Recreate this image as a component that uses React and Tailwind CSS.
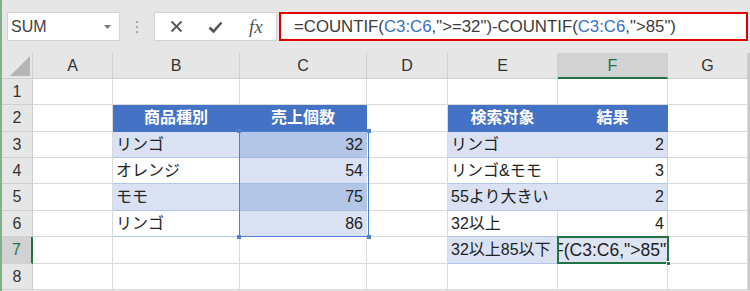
import React from "react";

const FONT = { fontFamily: '"Liberation Sans", "Noto Sans CJK JP", sans-serif' };

const K = {
  plain: "bg-white border-r border-b border-[#dadada]",
  head: "bg-[#4472c4] text-white font-bold border-r border-b border-[#4472c4]",
  band: "bg-[#d9e1f2] border-r border-b border-r-[#d9e1f2] border-b-[#b4c6e7]",
  bandEnd: "bg-[#d9e1f2] border-r border-b border-r-[#c3cfe9] border-b-[#b4c6e7]",
  white: "bg-white border-r border-b border-r-[#dadada] border-b-[#b4c6e7]",
  whiteEnd: "bg-white border-r border-b border-r-[#c3cfe9] border-b-[#b4c6e7]",
  selDark: "bg-[#b4c6e7] border-r border-b border-r-[#b4c6e7] border-b-[#a6bbe2]",
  selLight: "bg-[#d9e1f2] border-r border-b border-r-[#d9e1f2] border-b-[#a6bbe2]",
  active: "bg-[#dde5f3] border-r border-b border-[#dadada]",
};

const AL = {
  l: "justify-start pl-[3px]",
  r: "justify-end pr-[3px]",
  c: "justify-center",
};

const P = { k: "plain" };
const rows = [
  [P, P, P, P, P, P, P],
  [P, { k: "head", t: "商品種別", a: "c" }, { k: "head", t: "売上個数", a: "c" }, P, { k: "head", t: "検索対象", a: "c" }, { k: "head", t: "結果", a: "c" }, P],
  [P, { k: "band", t: "リンゴ" }, { k: "selDark", t: "32", a: "r" }, P, { k: "band", t: "リンゴ" }, { k: "bandEnd", t: "2", a: "r" }, P],
  [P, { k: "white", t: "オレンジ" }, { k: "selLight", t: "54", a: "r" }, P, { k: "white", t: "リンゴ&モモ" }, { k: "whiteEnd", t: "3", a: "r" }, P],
  [P, { k: "band", t: "モモ" }, { k: "selDark", t: "75", a: "r" }, P, { k: "band", t: "55より大きい" }, { k: "bandEnd", t: "2", a: "r" }, P],
  [P, { k: "white", t: "リンゴ" }, { k: "selLight", t: "86", a: "r" }, P, { k: "white", t: "32以上" }, { k: "whiteEnd", t: "4", a: "r" }, P],
  [P, P, P, P, { k: "band", t: "32以上85以下" }, { k: "active", f: true }, P],
  [P, P, P, P, P, P, P],
];

const letters = ["A", "B", "C", "D", "E", "F", "G"];

function Formula() {
  return (
    <>
      =COUNTIF(<span className="text-[#3a6fc2]">C3:C6</span>,"&gt;=32")-COUNTIF(
      <span className="text-[#3a6fc2]">C3:C6</span>,"&gt;85")
    </>
  );
}

export default function App() {
  return (
    <div className="flex w-[750px] h-[291px] overflow-hidden bg-[#e6e6e6]" style={FONT}>
      <div className="w-[2px] shrink-0 bg-[#7fb08c]" />
      <div className="flex flex-col flex-1">
        {/* toolbar */}
        <div className="h-[53px] shrink-0 flex items-start pt-[12px] bg-[#e6e6e6]">
          <div className="ml-[5px] w-[113px] h-[29px] bg-white border border-[#d4d4d4] flex items-center justify-between pl-[3px] pr-[8px]">
            <span className="text-[16px] text-[#444]">SUM</span>
            <svg width="7" height="4" viewBox="0 0 7 4"><path d="M0 0h7L3.5 4z" fill="#777" /></svg>
          </div>
          <div className="w-[34px] h-[29px] flex flex-col items-center justify-center gap-[3px]">
            <div className="w-[2px] h-[2px] bg-[#a8a8a8]" />
            <div className="w-[2px] h-[2px] bg-[#a8a8a8]" />
            <div className="w-[2px] h-[2px] bg-[#a8a8a8]" />
          </div>
          <div className="w-[123px] h-[29px] bg-white border border-[#d4d4d4] flex items-center">
            <div className="w-[41px] flex justify-center pl-[2px]">
              <svg width="13" height="13" viewBox="0 0 13 13"><path d="M1.5 1.5l10 10M11.5 1.5l-10 10" stroke="#555" strokeWidth="1.8" /></svg>
            </div>
            <div className="w-[41px] flex justify-center">
              <svg width="15" height="12" viewBox="0 0 15 12"><path d="M1.5 6.5l4 4 8-9" stroke="#555" strokeWidth="2.6" fill="none" /></svg>
            </div>
            <div className="w-[41px] flex justify-center">
              <span className="italic text-[19px] text-[#555] leading-none" style={{ fontFamily: '"Liberation Serif", serif' }}>fx</span>
            </div>
          </div>
          <div className="ml-[2px] w-[469px] h-[29px] bg-white border-2 border-[#e00000] flex items-center pl-[13px] text-[16.8px] text-[#3c3c3c] whitespace-nowrap">
            <Formula />
          </div>
        </div>
        {/* grid */}
        <div className="flex">
          <div className="relative grid grid-cols-[31px_80px_127px_127px_81px_110px_110px_80px] grid-rows-[26px_26px_27px_26px_26px_27px_26px_27px_26px] text-[16px] text-[#222]">
            {/* corner */}
            <div className="bg-[#e6e6e6] border-r border-b border-[#cfcfcf] flex items-end justify-end p-[2px]">
              <svg width="20" height="20" viewBox="0 0 20 20"><path d="M20 0V20H0z" fill="#b5b5b5" /></svg>
            </div>
            {letters.map((l) =>
              l === "F" ? (
                <div key={l} className="bg-[#d2d2d2] text-[#217346] border-r border-[#cfcfcf] border-b-2 border-b-[#217346] flex items-center justify-center pt-[1px]">{l}</div>
              ) : (
                <div key={l} className="bg-[#e6e6e6] text-[#333] border-r border-b border-[#cfcfcf] flex items-center justify-center">{l}</div>
              )
            )}
            {rows.map((r, i) => (
              <React.Fragment key={i}>
                {i === 6 ? (
                  <div className="bg-[#d2d2d2] text-[#217346] border-b border-b-[#cfcfcf] border-r-2 border-r-[#217346] flex items-center justify-center">{i + 1}</div>
                ) : (
                  <div className="bg-[#e6e6e6] text-[#333] border-r border-b border-[#cfcfcf] flex items-center justify-center">{i + 1}</div>
                )}
                {r.map((c, j) => (
                  <div key={j} className={`${K[c.k]} flex items-center overflow-hidden whitespace-nowrap ${c.f ? "justify-end" : AL[c.a || "l"]}`}>
                    {c.f ? (
                      <span className="mr-[-5px] text-[17.5px] text-[#222]"><span>=COUNTIF(C3:C6,"&gt;=32")-COUNTIF(C3:C6,"&gt;85")</span></span>
                    ) : (
                      c.t
                    )}
                  </div>
                ))}
              </React.Fragment>
            ))}
            {/* selection C3:C6 */}
            <div className="absolute left-[237px] top-[78px] w-[130px] h-[106px] border border-[#4f7fd3] pointer-events-none">
              <div className="absolute left-[-3px] top-[-3px] w-[4px] h-[4px] bg-[#4f7fd3]" />
              <div className="absolute right-[-3px] top-[-3px] w-[4px] h-[4px] bg-[#4f7fd3]" />
              <div className="absolute left-[-3px] bottom-[-3px] w-[4px] h-[4px] bg-[#4f7fd3]" />
              <div className="absolute right-[-3px] bottom-[-3px] w-[4px] h-[4px] bg-[#4f7fd3]" />
            </div>
            {/* active cell F7 */}
            <div className="absolute left-[555px] top-[183px] w-[112px] h-[28px] border-2 border-[#217346] pointer-events-none">
              <div className="absolute right-[-4px] bottom-[-4px] w-[5px] h-[5px] bg-[#217346] border border-white" />
            </div>
          </div>
          <div className="w-[2px] bg-[#c8c8c8]" />
        </div>
      </div>
    </div>
  );
}
